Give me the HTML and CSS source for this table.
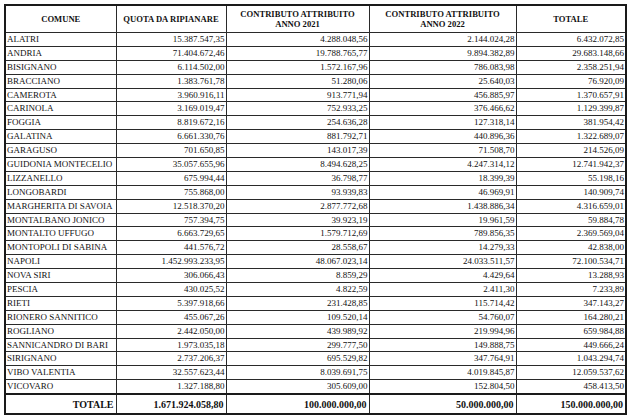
FILE: index.html
```html
<!DOCTYPE html>
<html lang="it">
<head>
<meta charset="utf-8">
<title>Riparto contributo</title>
<link rel="stylesheet" href="styles.css">
</head>
<body>
<table class="riparto">
  <colgroup>
    <col class="c-comune"><col class="c-quota"><col class="c-2021"><col class="c-2022"><col class="c-tot">
  </colgroup>
  <thead>
    <tr class="head">
      <th>COMUNE</th>
      <th>QUOTA DA RIPIANARE</th>
      <th>CONTRIBUTO ATTRIBUITO<br>ANNO 2021</th>
      <th>CONTRIBUTO ATTRIBUITO<br>ANNO 2022</th>
      <th>TOTALE</th>
    </tr>
  </thead>
  <tbody>
    <tr><td>ALATRI</td><td>15.387.547,35</td><td>4.288.048,56</td><td>2.144.024,28</td><td>6.432.072,85</td></tr>
    <tr><td>ANDRIA</td><td>71.404.672,46</td><td>19.788.765,77</td><td>9.894.382,89</td><td>29.683.148,66</td></tr>
    <tr><td>BISIGNANO</td><td>6.114.502,00</td><td>1.572.167,96</td><td>786.083,98</td><td>2.358.251,94</td></tr>
    <tr><td>BRACCIANO</td><td>1.383.761,78</td><td>51.280,06</td><td>25.640,03</td><td>76.920,09</td></tr>
    <tr><td>CAMEROTA</td><td>3.960.916,11</td><td>913.771,94</td><td>456.885,97</td><td>1.370.657,91</td></tr>
    <tr><td>CARINOLA</td><td>3.169.019,47</td><td>752.933,25</td><td>376.466,62</td><td>1.129.399,87</td></tr>
    <tr><td>FOGGIA</td><td>8.819.672,16</td><td>254.636,28</td><td>127.318,14</td><td>381.954,42</td></tr>
    <tr><td>GALATINA</td><td>6.661.330,76</td><td>881.792,71</td><td>440.896,36</td><td>1.322.689,07</td></tr>
    <tr><td>GARAGUSO</td><td>701.650,85</td><td>143.017,39</td><td>71.508,70</td><td>214.526,09</td></tr>
    <tr><td>GUIDONIA MONTECELIO</td><td>35.057.655,96</td><td>8.494.628,25</td><td>4.247.314,12</td><td>12.741.942,37</td></tr>
    <tr><td>LIZZANELLO</td><td>675.994,44</td><td>36.798,77</td><td>18.399,39</td><td>55.198,16</td></tr>
    <tr><td>LONGOBARDI</td><td>755.868,00</td><td>93.939,83</td><td>46.969,91</td><td>140.909,74</td></tr>
    <tr><td>MARGHERITA DI SAVOIA</td><td>12.518.370,20</td><td>2.877.772,68</td><td>1.438.886,34</td><td>4.316.659,01</td></tr>
    <tr><td>MONTALBANO JONICO</td><td>757.394,75</td><td>39.923,19</td><td>19.961,59</td><td>59.884,78</td></tr>
    <tr><td>MONTALTO UFFUGO</td><td>6.663.729,65</td><td>1.579.712,69</td><td>789.856,35</td><td>2.369.569,04</td></tr>
    <tr><td>MONTOPOLI DI SABINA</td><td>441.576,72</td><td>28.558,67</td><td>14.279,33</td><td>42.838,00</td></tr>
    <tr><td>NAPOLI</td><td>1.452.993.233,95</td><td>48.067.023,14</td><td>24.033.511,57</td><td>72.100.534,71</td></tr>
    <tr><td>NOVA SIRI</td><td>306.066,43</td><td>8.859,29</td><td>4.429,64</td><td>13.288,93</td></tr>
    <tr><td>PESCIA</td><td>430.025,52</td><td>4.822,59</td><td>2.411,30</td><td>7.233,89</td></tr>
    <tr><td>RIETI</td><td>5.397.918,66</td><td>231.428,85</td><td>115.714,42</td><td>347.143,27</td></tr>
    <tr><td>RIONERO SANNITICO</td><td>455.067,26</td><td>109.520,14</td><td>54.760,07</td><td>164.280,21</td></tr>
    <tr><td>ROGLIANO</td><td>2.442.050,00</td><td>439.989,92</td><td>219.994,96</td><td>659.984,88</td></tr>
    <tr><td>SANNICANDRO DI BARI</td><td>1.973.035,18</td><td>299.777,50</td><td>149.888,75</td><td>449.666,24</td></tr>
    <tr><td>SIRIGNANO</td><td>2.737.206,37</td><td>695.529,82</td><td>347.764,91</td><td>1.043.294,74</td></tr>
    <tr><td>VIBO VALENTIA</td><td>32.557.623,44</td><td>8.039.691,75</td><td>4.019.845,87</td><td>12.059.537,62</td></tr>
    <tr><td>VICOVARO</td><td>1.327.188,80</td><td>305.609,00</td><td>152.804,50</td><td>458.413,50</td></tr>
  </tbody>
  <tfoot>
    <tr class="total">
      <td>TOTALE</td><td>1.671.924.058,80</td><td>100.000.000,00</td><td>50.000.000,00</td><td>150.000.000,00</td>
    </tr>
  </tfoot>
</table>
</body>
</html>
```

FILE: styles.css
```css
html, body {
  margin: 0;
  padding: 0;
  background: #ffffff;
}

body {
  padding: 4px 0 0 4px;
  font-family: "Liberation Serif", "Times New Roman", serif;
  color: #111111;
}

.riparto {
  border-collapse: collapse;
  table-layout: fixed;
  width: 621px;
  border: 2px solid #1a1a1a;
}

.c-comune { width: 111px; }
.c-quota { width: 110px; }
.c-2021 { width: 143px; }
.c-2022 { width: 147px; }
.c-tot { width: 110px; }

.riparto th,
.riparto td {
  border: 1px solid #2a2a2a;
  padding: 0 2px;
  white-space: nowrap;
  overflow: hidden;
}

.head th {
  height: 26px;
  font-size: 8.6px;
  font-weight: bold;
  line-height: 10px;
  text-align: center;
  vertical-align: middle;
}

.riparto tbody td {
  height: 12.9px;
  font-size: 9px;
  line-height: 11px;
  text-align: right;
  vertical-align: middle;
  padding: 0 1px 0 2px;
}

.riparto tbody td:first-child {
  text-align: left;
  padding-left: 1px;
}

.total td {
  height: 18px;
  border-top: 2px solid #1a1a1a;
  border-bottom: 2px solid #1a1a1a;
  font-size: 10px;
  font-weight: bold;
  text-align: right;
  vertical-align: middle;
  padding: 0 2px;
}
```
